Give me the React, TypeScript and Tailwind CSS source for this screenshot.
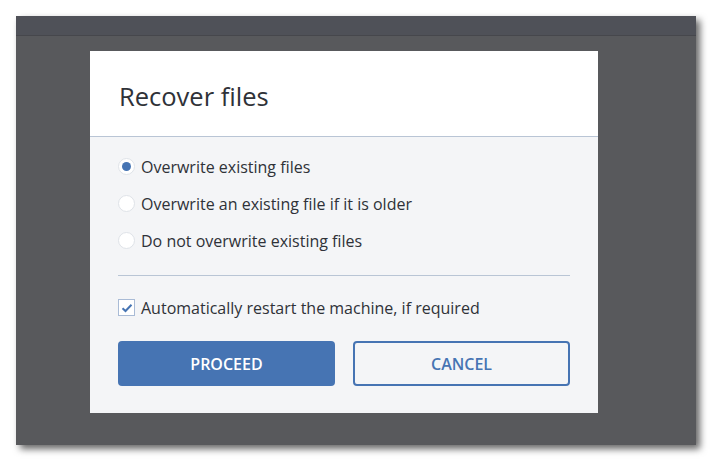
import { useState } from "react";

const OPTIONS = [
  "Overwrite existing files",
  "Overwrite an existing file if it is older",
  "Do not overwrite existing files",
];

function Radio({ checked }: { checked: boolean }) {
  return (
    <span className="w-[17px] h-[17px] rounded-full bg-white border border-[#dfe3e8] flex items-center justify-center shrink-0">
      {checked && <span className="w-[9px] h-[9px] rounded-full bg-[#4674b3]" />}
    </span>
  );
}

export default function App() {
  const [choice, setChoice] = useState(0);
  const [restart, setRestart] = useState(true);

  return (
    <div className="w-[712px] h-[462px] bg-white pt-[16px] pl-[16px] font-['Open_Sans',sans-serif]">
      <div className="w-[680px] h-[429px] flex flex-col bg-[#58595c] shadow-[4px_4px_7px_rgba(0,0,0,0.6)]">
        {/* title bar */}
        <div className="h-[20px] bg-[#4f5158] border-b border-[#46474c]" />

        <div className="pt-[15px] pl-[74px]">
          <div className="w-[508px] h-[362px] flex flex-col bg-[#f4f5f7]">
            <div className="h-[86px] bg-white border-b border-[#b9c5d5] pl-[29px] pt-[28px]">
              <h1 className="text-[25.5px] leading-[34px] text-[#2f3238]">Recover files</h1>
            </div>

            <div className="px-[28px] pt-[11px] pb-[27px] flex flex-col">
              {OPTIONS.map((label, i) => (
                <label
                  key={label}
                  onClick={() => setChoice(i)}
                  className="h-[37px] flex items-center gap-[6px] cursor-pointer"
                >
                  <Radio checked={choice === i} />
                  <span className="text-[16px] text-[#2f3238]">{label}</span>
                </label>
              ))}

              <div className="mt-[16px] border-t border-[#b9c5d5]" />

              <label
                onClick={() => setRestart(!restart)}
                className="mt-[13px] h-[37px] flex items-center gap-[6px] cursor-pointer"
              >
                <span className="w-[17px] h-[17px] bg-white border border-[#a9bbd6] flex items-center justify-center shrink-0">
                  {restart && (
                    <svg width="12" height="10" viewBox="0 0 12 10" fill="none">
                      <path d="M1.5 5.2 L4.5 8 L10.5 1.8" stroke="#4674b3" strokeWidth="2" />
                    </svg>
                  )}
                </span>
                <span className="text-[16px] text-[#2f3238]">
                  Automatically restart the machine, if required
                </span>
              </label>

              <div className="mt-[15px] flex gap-[18px]">
                <button
                  type="button"
                  className="w-[217px] h-[45px] rounded-[4px] bg-[#4674b3] text-white text-[16px] font-semibold"
                >
                  PROCEED
                </button>
                <button
                  type="button"
                  className="w-[217px] h-[45px] rounded-[4px] border-2 border-[#4674b3] text-[#4674b3] text-[16px] font-semibold"
                >
                  CANCEL
                </button>
              </div>
            </div>
          </div>
        </div>
      </div>
    </div>
  );
}
